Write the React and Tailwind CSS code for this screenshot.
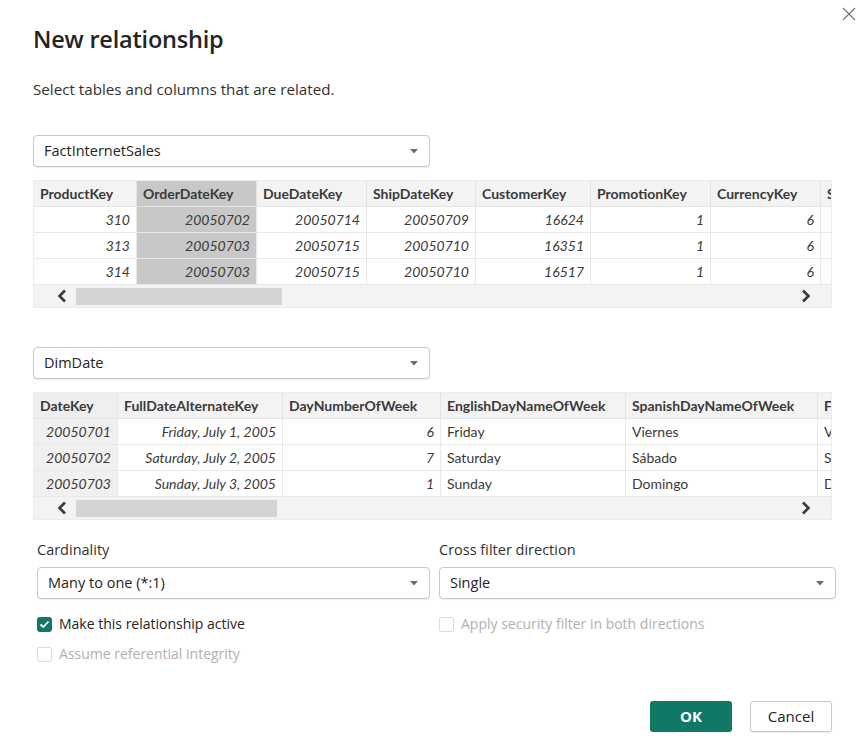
import React from "react";

const UI = { fontFamily: '"Open Sans", "Noto Sans", sans-serif' };
const TB = { fontFamily: 'Lato, "Liberation Sans", sans-serif' };

function Caret() {
  return (
    <svg width="8" height="5" viewBox="0 0 8 5" className="shrink-0">
      <path d="M0 0 H8 L4 4.5 Z" fill="#6b6b6b" />
    </svg>
  );
}

function Select({ value, className = "" }) {
  return (
    <div
      className={`flex items-center justify-between h-[32px] border border-[#c8c8c8] rounded-[4px] bg-white pl-[10px] pr-[11px] shadow-[0_1px_1px_rgba(0,0,0,0.08)] ${className}`}
    >
      <span className="text-[14.5px] text-[#252423]">{value}</span>
      <Caret />
    </div>
  );
}

function Chevron({ dir }) {
  return (
    <svg width="12" height="14" viewBox="0 0 12 14">
      {dir === "left" ? (
        <path d="M9 1.5 L3.5 7 L9 12.5" stroke="#3a3a3a" strokeWidth="2.6" fill="none" />
      ) : (
        <path d="M3 1.5 L8.5 7 L3 12.5" stroke="#3a3a3a" strokeWidth="2.6" fill="none" />
      )}
    </svg>
  );
}

function DataTable({ columns, rows, thumbWidth }) {
  return (
    <div className="w-[799px] overflow-hidden bg-white border border-[#ececec]" style={TB}>
      <div className="flex h-[26px]">
        {columns.map((c, i) => (
          <div
            key={i}
            className={`shrink-0 flex items-center px-[6px] border-r border-b border-[#e4e4e4] text-[14px] font-bold text-[#3b3a39] whitespace-nowrap overflow-hidden ${c.hl ? "bg-[#c8c8c8]" : c.soft ? "bg-[#efefef]" : "bg-[#f3f3f3]"}`}
            style={{ width: c.w }}
          >
            {c.name}
          </div>
        ))}
      </div>
      {rows.map((r, ri) => (
        <div key={ri} className="flex h-[26px]">
          {columns.map((c, i) => (
            <div
              key={i}
              className={`shrink-0 flex items-center px-[6px] border-r border-b border-[#e8e8e8] text-[14px] text-[#3b3a39] whitespace-nowrap overflow-hidden ${c.right ? "justify-end italic" : "justify-start"} ${c.hl ? "bg-[#c8c8c8]" : c.soft ? "bg-[#f0f0f0]" : "bg-white"}`}
              style={{ width: c.w }}
            >
              {r[i]}
            </div>
          ))}
        </div>
      ))}
      <div className="flex items-center h-[22px] bg-[#f3f3f3]">
        <div className="w-[42px] flex justify-end pr-[8px]">
          <Chevron dir="left" />
        </div>
        <div className="h-[17px] bg-[#d3d5d3]" style={{ width: thumbWidth }} />
        <div className="flex-1" />
        <div className="w-[40px] flex justify-start pl-[9px]">
          <Chevron dir="right" />
        </div>
      </div>
    </div>
  );
}

function Checkbox({ checked, disabled, label }) {
  return (
    <div className="flex items-center gap-[7px] h-[20px]">
      {checked ? (
        <div className="w-[15px] h-[15px] rounded-[3px] bg-[#117865] flex items-center justify-center">
          <svg width="11" height="9" viewBox="0 0 11 9">
            <path d="M1.5 4.5 L4.2 7 L9.5 1.5" stroke="white" strokeWidth="1.8" fill="none" />
          </svg>
        </div>
      ) : (
        <div className="w-[15px] h-[15px] rounded-[2px] border border-[#dcdcdc] bg-white" />
      )}
      <span className={`text-[14px] leading-[20px] ${disabled ? "text-[#b3b0ad]" : "text-[#252423]"}`}>{label}</span>
    </div>
  );
}

export default function App() {
  const cols1 = [
    { name: "ProductKey", w: 103, right: true },
    { name: "OrderDateKey", w: 120, right: true, hl: true },
    { name: "DueDateKey", w: 110, right: true },
    { name: "ShipDateKey", w: 109, right: true },
    { name: "CustomerKey", w: 115, right: true },
    { name: "PromotionKey", w: 120, right: true },
    { name: "CurrencyKey", w: 110, right: true },
    { name: "SalesTerritoryKey", w: 140, right: true },
  ];
  const rows1 = [
    ["310", "20050702", "20050714", "20050709", "16624", "1", "6", "6"],
    ["313", "20050703", "20050715", "20050710", "16351", "1", "6", "4"],
    ["314", "20050703", "20050715", "20050710", "16517", "1", "6", "9"],
  ];
  const cols2 = [
    { name: "DateKey", w: 84, right: true, soft: true },
    { name: "FullDateAlternateKey", w: 165, right: true },
    { name: "DayNumberOfWeek", w: 158, right: true },
    { name: "EnglishDayNameOfWeek", w: 185 },
    { name: "SpanishDayNameOfWeek", w: 192 },
    { name: "FrenchDayNameOfWeek", w: 180 },
  ];
  const rows2 = [
    ["20050701", "Friday, July 1, 2005", "6", "Friday", "Viernes", "Vendredi"],
    ["20050702", "Saturday, July 2, 2005", "7", "Saturday", "Sábado", "Samedi"],
    ["20050703", "Sunday, July 3, 2005", "1", "Sunday", "Domingo", "Dimanche"],
  ];

  return (
    <div className="w-[867px] h-[755px] bg-white relative overflow-hidden" style={UI}>
      <button className="absolute right-[10px] top-[6px] w-[16px] h-[16px] flex items-center justify-center">
        <svg width="14" height="14" viewBox="0 0 14 14">
          <path d="M1 1 L13 13 M13 1 L1 13" stroke="#707070" strokeWidth="1.1" />
        </svg>
      </button>

      <div className="pl-[33px] pt-[22px]">
        <h1 className="text-[23.5px] font-semibold text-[#252423] leading-[34px] tracking-[-0.2px]">New relationship</h1>
        <p className="mt-[23px] text-[15.2px] text-[#323130] leading-[20px]">Select tables and columns that are related.</p>

        <Select value="FactInternetSales" className="w-[397px] mt-[36px]" />
        <div className="mt-[13px]">
          <DataTable columns={cols1} rows={rows1} thumbWidth={206} />
        </div>

        <Select value="DimDate" className="w-[397px] mt-[39px]" />
        <div className="mt-[13px]">
          <DataTable columns={cols2} rows={rows2} thumbWidth={201} />
        </div>

        <div className="flex gap-[9px] mt-[20px] pl-[4px]">
          <div className="w-[393px] flex flex-col">
            <span className="text-[14.5px] text-[#323130] leading-[20px]">Cardinality</span>
            <Select value="Many to one (*:1)" className="mt-[7px]" />
            <div className="mt-[15px]">
              <Checkbox checked label="Make this relationship active" />
            </div>
            <div className="mt-[10px]">
              <Checkbox disabled label="Assume referential integrity" />
            </div>
          </div>
          <div className="w-[397px] flex flex-col">
            <span className="text-[14.5px] text-[#323130] leading-[20px]">Cross filter direction</span>
            <Select value="Single" className="mt-[7px]" />
            <div className="mt-[15px]">
              <Checkbox disabled label="Apply security filter in both directions" />
            </div>
          </div>
        </div>

        <div className="flex justify-end gap-[18px] w-[799px] mt-[37px]">
          <button className="w-[82px] h-[31px] rounded-[3px] bg-[#117865] text-white font-bold text-[15px]">OK</button>
          <button className="w-[82px] h-[31px] rounded-[3px] bg-white border border-[#c8c8c8] text-[#252423] text-[15px] shadow-[0_1px_1px_rgba(0,0,0,0.08)]">Cancel</button>
        </div>
      </div>
    </div>
  );
}
